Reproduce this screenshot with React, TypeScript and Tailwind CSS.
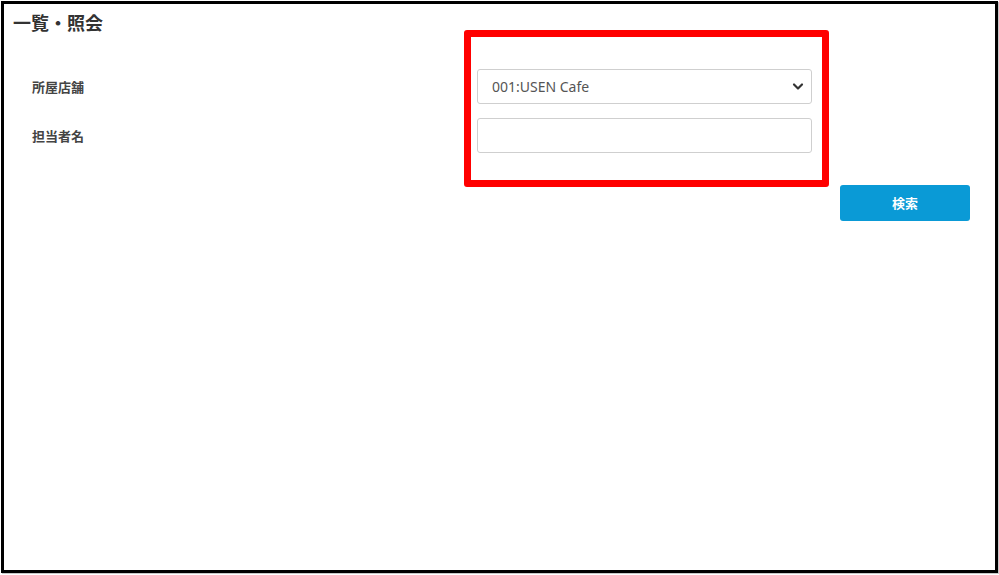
import React from 'react';

const App: React.FC = () => {
    return (
        <div className="w-[999px] h-[575px] bg-white pt-px pl-px" style={{ fontFamily: '"Noto Sans CJK JP", "Noto Sans", sans-serif' }}>
            <div className="relative w-[997px] h-[572px] border-[3px] border-black shadow-[1px_1px_0_#c8c8c8] bg-white">
                <h1 className="pl-[9px] pt-[6px] text-[18px] leading-[24px] font-bold text-[#333]">一覧・照会</h1>

                <div className="mt-[35px] pl-[28px] flex flex-col gap-[14px]">
                    <div className="flex items-center h-[35px]">
                        <label className="w-[445px] text-[13px] font-bold text-[#444]">所屋店舗</label>
                        <div className="relative w-[335px] h-[35px]">
                            <select
                                defaultValue="001"
                                className="appearance-none w-full h-full border border-[#cfcfcf] rounded-[3px] bg-white pl-[14px] text-[14px] text-[#555] outline-none"
                                style={{ fontFamily: '"Noto Sans", "Noto Sans CJK JP", sans-serif' }}
                            >
                                <option value="001">001:USEN Cafe</option>
                            </select>
                            <svg className="absolute right-[8px] top-[13px] pointer-events-none" width="12" height="9" viewBox="0 0 12 9">
                                <path d="M2 2.5 L6 6.5 L10 2.5" fill="none" stroke="#333" strokeWidth="2.2" strokeLinecap="round" strokeLinejoin="round" />
                            </svg>
                        </div>
                    </div>
                    <div className="flex items-center h-[35px]">
                        <label className="w-[445px] text-[13px] font-bold text-[#444]">担当者名</label>
                        <input type="text" className="w-[335px] h-[35px] border border-[#cfcfcf] rounded-[3px] bg-white px-[14px] text-[14px] outline-none" />
                    </div>
                </div>

                <div className="mt-[32px] pr-[25px] flex justify-end">
                    <button className="w-[130px] h-[36px] bg-[#0a9ad6] rounded-[3px] text-white text-[13px] font-bold">検索</button>
                </div>

                <div className="absolute left-[460px] top-[26px] w-[365px] h-[157px] border-[7px] border-[#ff0000] rounded-[3px] pointer-events-none" />
            </div>
        </div>
    );
};

export default App;
